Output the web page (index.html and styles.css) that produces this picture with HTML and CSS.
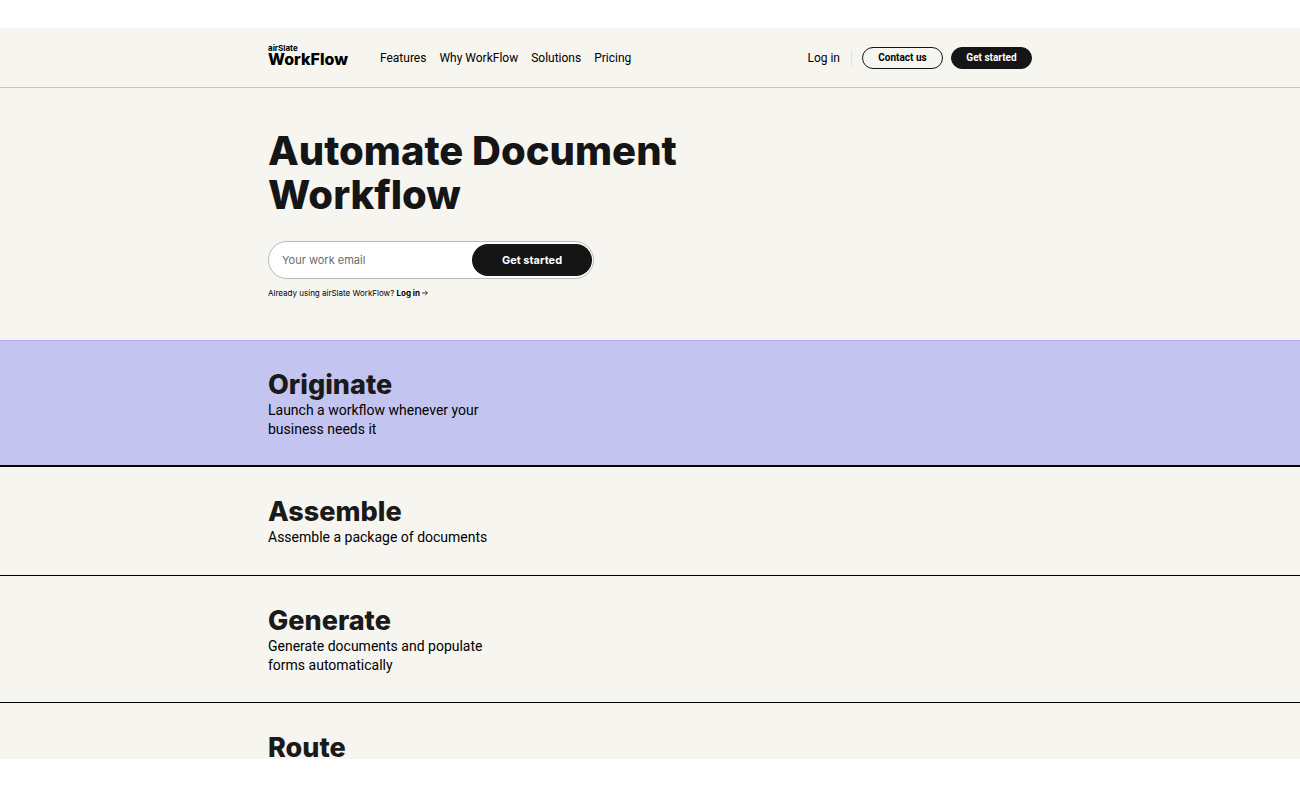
FILE: index.html
```html
<!DOCTYPE html>
<html lang="en">
<head>
  <meta charset="UTF-8">
  <meta name="viewport" content="width=device-width, initial-scale=1.0">
  <title>airSlate WorkFlow</title>
  <link rel="stylesheet" href="styles.css">
</head>
<body>
<div class="page">
  <header class="header">
    <div class="container header-row">
      <a class="logo" href="#">
        <span class="logo-top">airSlate</span>
        <span class="logo-name">WorkFlow</span>
      </a>
      <nav class="nav">
        <a href="#">Features</a>
        <a href="#">Why WorkFlow</a>
        <a href="#">Solutions</a>
        <a href="#">Pricing</a>
      </nav>
      <div class="actions">
        <a class="login" href="#">Log in</a>
        <button type="button" class="btn btn-outline">Contact us</button>
        <button type="button" class="btn">Get started</button>
      </div>
    </div>
  </header>

  <main>
    <section class="hero">
      <div class="container">
        <h1>Automate Document<br>Workflow</h1>
        <form class="signup">
          <input type="email" id="email" aria-label="Your work email" placeholder="Your work email">
          <button type="submit">Get started</button>
        </form>
        <p class="hint">Already using airSlate WorkFlow? <a href="#">Log in</a>
          <svg width="6" height="6" viewBox="0 0 6 6" fill="none" stroke="#111" stroke-width="0.8" aria-hidden="true"><path d="M0 3h5.4M3.2 0.8L5.4 3L3.2 5.2"/></svg>
        </p>
      </div>
    </section>

    <section class="step step-active">
      <div class="container">
        <h2>Originate</h2>
        <p>Launch a workflow whenever your business needs it</p>
      </div>
    </section>
    <section class="step">
      <div class="container">
        <h2>Assemble</h2>
        <p>Assemble a package of documents</p>
      </div>
    </section>
    <section class="step">
      <div class="container">
        <h2>Generate</h2>
        <p>Generate documents and populate forms automatically</p>
      </div>
    </section>
    <section class="step">
      <div class="container">
        <h2>Route</h2>
      </div>
    </section>
  </main>
</div>
</body>
</html>
```
FILE: styles.css
```css
* {
  box-sizing: border-box;
}
body {
  margin: 0;
  height: 100vh;
  padding: 28px 0 29px;
  background-color: #fff;
  color: #000;
  font-family: Roboto, "Liberation Sans", sans-serif;
}
a {
  color: inherit;
  text-decoration: none;
}
.page {
  height: 100%;
  overflow: hidden;
  background-color: #f6f5f0;
}
.container {
  max-width: 796px;
  margin: 0 auto;
  padding: 0 16px;
}
.header {
  border-bottom: 1px solid #c9c8c4;
}
.header-row {
  display: flex;
  align-items: center;
  height: 59px;
}
.logo {
  display: flex;
  flex-direction: column;
  margin-right: 32px;
  padding-bottom: 5px;
  font-family: Inter, sans-serif;
}
.logo-top {
  font-size: 8px;
  line-height: 8px;
  font-weight: 700;
}
.logo-name {
  font-size: 16px;
  line-height: 15px;
  font-weight: 800;
}
.nav {
  display: flex;
  gap: 13px;
}
.nav a,
.login {
  font-size: 12px;
  line-height: 16px;
}
.actions {
  display: flex;
  align-items: center;
  gap: 8px;
  margin-left: auto;
}
.login {
  margin-right: 2px;
  padding-right: 11px;
  border-right: 1px solid #e2e1dc;
}
.btn {
  height: 22px;
  min-width: 81px;
  padding: 0 14px;
  border: 1px solid #151515;
  border-radius: 11px;
  background-color: #151515;
  color: #fff;
  font-family: inherit;
  font-size: 10px;
  font-weight: 700;
  cursor: pointer;
}
.btn-outline {
  background-color: transparent;
  color: #000;
}
.hero {
  padding: 41px 0;
}
h1 {
  margin: 0 0 24px;
  color: #151515;
  font-family: Inter, sans-serif;
  font-size: 40px;
  line-height: 44px;
  font-weight: 800;
}
.signup {
  display: flex;
  max-width: 326px;
  height: 38px;
  padding: 2px 1px 2px 2px;
  border: 1px solid #bbbab6;
  border-radius: 19px;
  background-color: #fff;
}
.signup input {
  flex: 1;
  min-width: 0;
  padding: 0 11px;
  border: 0;
  outline: 0;
  background: transparent;
  font-family: Inter, sans-serif;
  font-size: 11px;
}
.signup input::placeholder {
  color: #6b6b6b;
}
.signup button {
  width: 120px;
  border: 0;
  border-radius: 16px;
  background-color: #151515;
  color: #fff;
  font-family: Inter, sans-serif;
  font-size: 11px;
  font-weight: 700;
  cursor: pointer;
}
.hint {
  margin: 8px 0 0;
  font-family: Inter, sans-serif;
  font-size: 8px;
  line-height: 12px;
}
.hint a {
  font-weight: 700;
}
.step {
  min-height: 109px;
  padding: 29px 0 27px;
  border-bottom: 1px solid #000;
}
.step-active {
  padding: 28px 0 26px;
  background-color: #c4c4f0;
  border-top: 1px solid #b0b0f0;
  border-bottom-width: 2px;
}
h2 {
  margin: 0 0 1px;
  color: #1a1a1a;
  font-family: Inter, sans-serif;
  font-size: 27px;
  line-height: 31px;
  font-weight: 800;
}
.step p {
  max-width: 230px;
  margin: 0;
  font-size: 14px;
  line-height: 19px;
}
```
